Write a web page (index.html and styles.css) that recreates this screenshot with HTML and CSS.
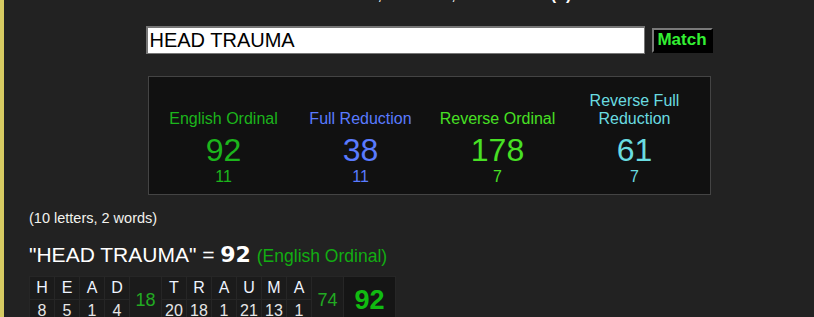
FILE: index.html
```html
<!DOCTYPE html>
<html lang="en">
<head>
<meta charset="utf-8">
<title>Gematria - HEAD TRAUMA</title>
<link rel="stylesheet" href="styles.css">
</head>
<body>
<div class="page">
  <div class="main">
    <p class="intro">Enter a word, sentence, or a number <b>(?)</b></p>
    <form class="search">
      <input class="search-input" type="text" value="HEAD TRAUMA">
      <button class="match-btn" type="button">Match</button>
    </form>
    <div class="ciphers">
      <div class="cipher eo">
        <div class="label">English Ordinal</div>
        <div class="value">92</div>
        <div class="sub">11</div>
      </div>
      <div class="cipher fr">
        <div class="label">Full Reduction</div>
        <div class="value">38</div>
        <div class="sub">11</div>
      </div>
      <div class="cipher ro">
        <div class="label">Reverse Ordinal</div>
        <div class="value">178</div>
        <div class="sub">7</div>
      </div>
      <div class="cipher rfr">
        <div class="label">Reverse Full<br>Reduction</div>
        <div class="value">61</div>
        <div class="sub">7</div>
      </div>
    </div>
  </div>
  <div class="results">
    <p class="count">(10 letters, 2 words)</p>
    <h2 class="phrase">"HEAD TRAUMA" = <b class="phrase-num">92</b> <span class="phrase-cipher">(English Ordinal)</span></h2>
    <table class="breakdown">
      <tr>
        <td class="ltr">H</td><td class="ltr">E</td><td class="ltr">A</td><td class="ltr">D</td>
        <td class="wsum" rowspan="2">18</td>
        <td class="ltr">T</td><td class="ltr">R</td><td class="ltr">A</td><td class="ltr">U</td><td class="ltr">M</td><td class="ltr">A</td>
        <td class="wsum" rowspan="2">74</td>
        <td class="total" rowspan="2">92</td>
      </tr>
      <tr>
        <td class="num">8</td><td class="num">5</td><td class="num">1</td><td class="num">4</td>
        <td class="num">20</td><td class="num">18</td><td class="num">1</td><td class="num">21</td><td class="num">13</td><td class="num">1</td>
      </tr>
    </table>
  </div>
</div>
</body>
</html>
```

FILE: styles.css
```css
html, body {
  margin: 0;
  padding: 0;
  background: #222222;
  font-family: "Liberation Sans", Arial, sans-serif;
  color: #ffffff;
}

.page {
  border-left: 4px solid #d6cb62;
  height: 317px;
  overflow: hidden;
}

.main {
  padding-left: 40px;
  display: flex;
  flex-direction: column;
  align-items: center;
}

.intro {
  margin: -14px 0 0;
  height: 18px;
  font-size: 16px;
  line-height: 18px;
  color: #ffffff;
  white-space: nowrap;
}

.search {
  display: flex;
  align-items: center;
  gap: 7px;
  margin: 22px 0 0;
}

.search-input {
  box-sizing: border-box;
  width: 499px;
  height: 28px;
  margin: 0;
  padding: 0 2px;
  border: 1px solid #767676;
  border-top-width: 2px;
  border-left-width: 2px;
  background: #ffffff;
  color: #000000;
  font-family: "Liberation Sans", Arial, sans-serif;
  font-size: 20px;
}

.match-btn {
  box-sizing: border-box;
  width: 61px;
  height: 25px;
  margin: 0;
  padding: 0;
  background: #000000;
  color: #33ee33;
  font-family: "Liberation Sans", Arial, sans-serif;
  font-weight: bold;
  font-size: 17px;
  border: 2px solid;
  border-color: #7a7a7a #000000 #000000 #7a7a7a;
}

.ciphers {
  box-sizing: border-box;
  width: 563px;
  margin-top: 22px;
  padding: 15px 0 8px;
  border: 1px solid #444444;
  background: #111111;
  display: grid;
  grid-template-columns: repeat(4, 137px);
  justify-content: center;
}

.cipher {
  display: flex;
  flex-direction: column;
  align-items: center;
  text-align: center;
}

.label {
  height: 36px;
  display: flex;
  align-items: flex-end;
  justify-content: center;
  font-size: 16px;
  line-height: 18px;
}

.value {
  margin-top: 4px;
  font-size: 32px;
  line-height: 36px;
}

.sub {
  margin-top: 0;
  font-size: 16px;
  line-height: 18px;
}

.eo { color: #1cb51c; }
.fr { color: #5a7bff; }
.ro { color: #48e024; }
.rfr { color: #6adce0; }

.results {
  padding-left: 25px;
}

.count {
  margin: 15px 0 0;
  font-size: 14.5px;
  line-height: 17px;
  color: #f2f2ee;
}

.phrase {
  margin: 15px 0 0;
  font-size: 21px;
  line-height: 26px;
  font-weight: normal;
  color: #ffffff;
  white-space: nowrap;
}

.phrase-num {
  font-family: "DejaVu Sans", Verdana, sans-serif;
  font-weight: bold;
  font-size: 22px;
}

.phrase-cipher {
  font-size: 17.5px;
  color: #12ad12;
}

.breakdown {
  margin-top: 7px;
  border-collapse: collapse;
  background: #1b1b1b;
}

.breakdown td {
  padding: 0;
  border: 1px solid #262626;
  text-align: center;
  height: 22px;
  line-height: 22px;
}

.ltr {
  width: 24px;
  font-size: 16px;
  color: #eef4ff;
}

.num {
  font-size: 16px;
  color: #e6e6e6;
}

.wsum {
  width: 31px;
  font-size: 18px;
  color: #22aa22;
}

.total {
  width: 51px;
  font-size: 27px;
  font-weight: bold;
  color: #11bb11;
  background: #151515;
}
```
